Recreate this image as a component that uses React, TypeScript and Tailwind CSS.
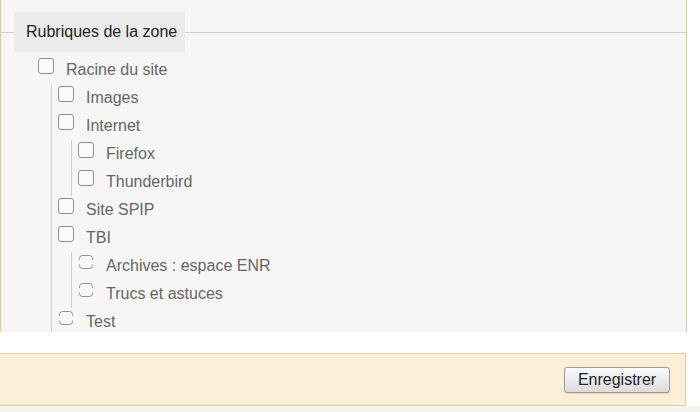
import React from "react";

type Node = { label: string; broken?: boolean; children?: Node[] };

const tree: Node = {
  label: "Racine du site",
  children: [
    { label: "Images" },
    { label: "Internet", children: [{ label: "Firefox" }, { label: "Thunderbird" }] },
    { label: "Site SPIP" },
    {
      label: "TBI",
      children: [
        { label: "Archives : espace ENR", broken: true },
        { label: "Trucs et astuces", broken: true },
      ],
    },
    { label: "Test", broken: true },
  ],
};

function Box({ broken }: { broken?: boolean }) {
  if (broken) {
    return (
      <svg width="16" height="16" viewBox="0 0 16 16" className="mt-[2px] shrink-0">
        <path d="M1.5 6 V4.5 Q1.5 1.5 4.5 1.5 H11.5 Q14.5 1.5 14.5 4.5 V6" fill="none" stroke="#8f8f8f" strokeWidth="1" />
        <path d="M1.5 10.5 V11.5 Q1.5 14.5 4.5 14.5 H11.5 Q14.5 14.5 14.5 11.5 V10.5" fill="none" stroke="#8f8f8f" strokeWidth="1" />
      </svg>
    );
  }
  return <div className="mt-[2px] h-4 w-4 shrink-0 rounded-[3px] border border-[#8f8f8f] bg-[#fbfbfb]" />;
}

function Item({ node }: { node: Node }) {
  return (
    <li>
      <div className="flex h-[28px] items-start gap-3 leading-[28px]">
        <Box broken={node.broken} />
        <span className="whitespace-nowrap text-[16px] text-[#666]">{node.label}</span>
      </div>
      {node.children && (
        <ul className="ml-[13px] border-l border-[#cfcfcf] pl-[6px]">
          {node.children.map((c) => (
            <Item key={c.label} node={c} />
          ))}
        </ul>
      )}
    </li>
  );
}

export default function App() {
  return (
    <div className="h-[412px] w-[700px] overflow-hidden bg-white" style={{ fontFamily: '"Liberation Sans", Arial, sans-serif' }}>
      <div className="h-[332px] w-[687px] overflow-hidden border-x border-[#d8c8a6] bg-[#f6f6f6]">
        <fieldset className="mt-[12px] border-0 border-t border-[#d0d0d0]">
          <legend className="ml-[13px] h-[40px] w-[171px] bg-[#ebebeb] pl-[12px] text-[16px] leading-[40px] text-[#222]">
            Rubriques de la zone
          </legend>
          <ul className="pl-[37px] pt-[4px]">
            <Item node={tree} />
          </ul>
        </fieldset>
      </div>
      <div className="h-[21px]" />
      <div className="flex h-[53px] w-[686px] items-center justify-end border-y border-r border-[#e2cfa8] bg-[#fdeed7] pr-[15px]">
        <button className="h-[26px] w-[106px] rounded-[3px] border border-[#9a9a9a] bg-gradient-to-b from-[#fbfbfb] to-[#dcdcdc] text-[16px] text-[#222] shadow-[0_1px_1px_rgba(0,0,0,0.1)]">
          Enregistrer
        </button>
      </div>
      <div className="h-[6px] bg-[#f2f2ef]" />
    </div>
  );
}
